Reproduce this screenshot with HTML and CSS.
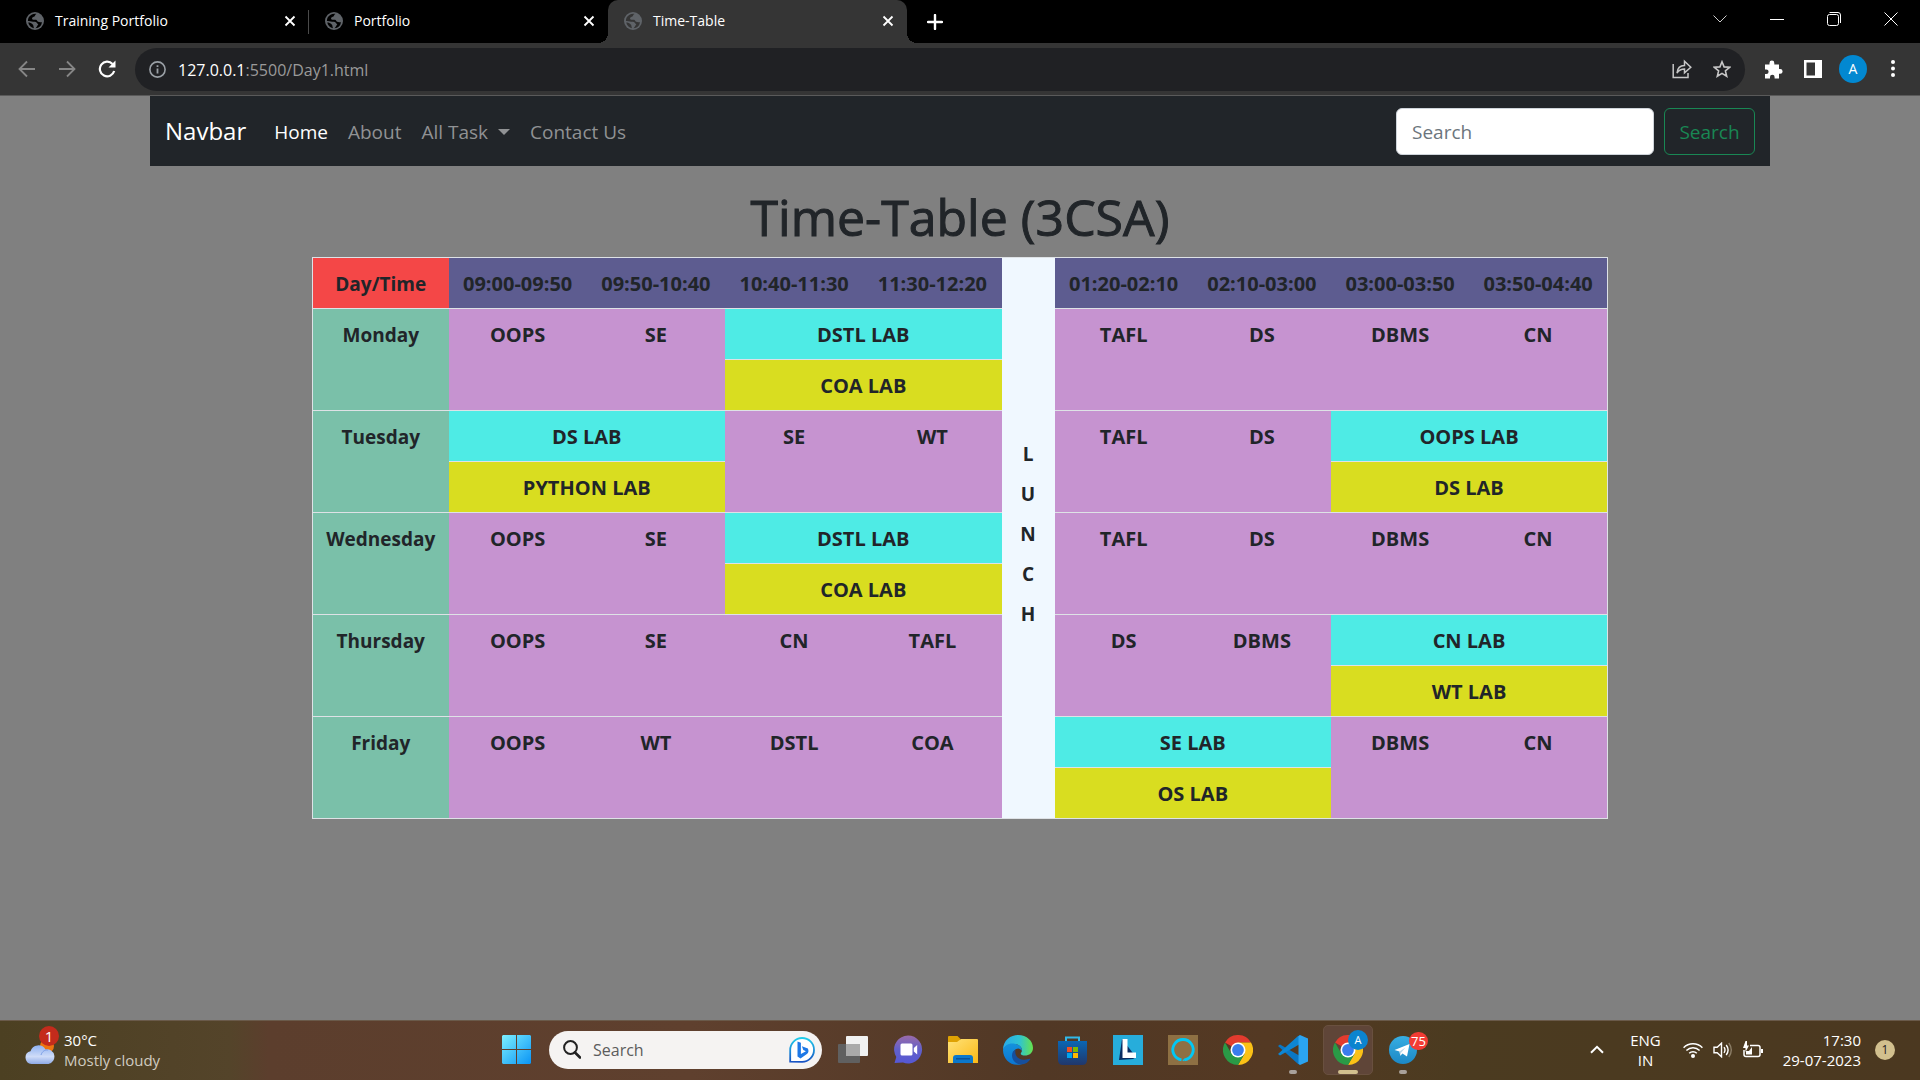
FILE: index.html
```html
<!DOCTYPE html>
<html lang="en">
<head>
<meta charset="utf-8">
<meta name="viewport" content="width=device-width, initial-scale=1">
<title>Time-Table</title>
<link rel="stylesheet" href="styles.css">
</head>
<body>
<svg class="defs" aria-hidden="true">
  <symbol id="globe" viewBox="0 0 18 18">
    <circle cx="9" cy="9" r="9" fill="#5f6368"/>
    <path d="M10.500 1.900C8.500 2.600 9.800 4 7.800 4.800 6 5.500 5.600 6.500 6.500 7.500 8 8.300 10 7.200 11 8.600 11.600 10 13 10.600 16 10.200A7.300 7.300 0 0 1 9.500 16.300C11.500 14.500 11 13.500 12.300 12.600 10.800 11.200 10.800 10 8.800 9.800 6 9.800 5 8.800 1.900 9A7.200 7.200 0 0 1 5.500 2.700C7 1.900 9 1.700 10.500 1.900zM2.200 10.500C4 10.500 5.500 11 6.500 12.200 7.800 13 7.200 14.500 8 16.200 5 15.800 2.800 13.500 2.200 10.500z" fill="currentColor"/>
  </symbol>
  <symbol id="cross" viewBox="0 0 12 12"><path d="M1.500 1.500l9 9M10.500 1.500l-9 9" stroke="#fff" stroke-width="1.800" fill="none"/></symbol>
  <symbol id="chrome" viewBox="0 0 30 30">
    <path d="M15 15L2 7.500A15 15 0 0 1 28 7.500H15z" fill="#e33b2e"/>
    <path d="M15 7.500H28A15 15 0 0 1 15 30L21.500 18.750z" fill="#fbc116"/>
    <path d="M2 7.500A15 15 0 0 0 15 30L21.500 18.750 8.500 18.750z" fill="#2a9a46"/>
    <circle cx="15" cy="15" r="7.500" fill="#fff"/><circle cx="15" cy="15" r="5.900" fill="#3b7ded"/>
  </symbol>
</svg>

<header class="browser">
  <div class="tabstrip">
    <div class="tabs">
      <div class="tab tab-divided"><svg class="favicon"><use href="#globe"/></svg><span class="tab-title">Training Portfolio</span><button class="tab-close" aria-label="Close tab"><svg><use href="#cross"/></svg></button></div>
      <div class="tab"><svg class="favicon"><use href="#globe"/></svg><span class="tab-title">Portfolio</span><button class="tab-close" aria-label="Close tab"><svg><use href="#cross"/></svg></button></div>
      <div class="tab tab-active"><svg class="favicon"><use href="#globe"/></svg><span class="tab-title">Time-Table</span><button class="tab-close" aria-label="Close tab"><svg><use href="#cross"/></svg></button></div>
      <button class="new-tab" aria-label="New tab"><svg width="16" height="16" viewBox="0 0 16 16"><path d="M8 1v14M1 8h14" stroke="#fff" stroke-width="2.400" stroke-linecap="round"/></svg></button>
    </div>
    <div class="window-controls">
      <button aria-label="Search tabs"><svg width="14" height="8" viewBox="0 0 14 8"><path d="M.5.5L7 7 13.500.5" fill="none" stroke="#ccc"/></svg></button>
      <button aria-label="Minimize"><svg width="14" height="14" viewBox="0 0 14 14"><path d="M0 7.500h14" stroke="#fff"/></svg></button>
      <button aria-label="Restore"><svg width="14" height="14" viewBox="0 0 14 14"><rect x=".5" y="2.500" width="11" height="11" rx="2" fill="none" stroke="#fff"/><path d="M2.500.5H11A2.500 2.500 0 0 1 13.500 3v8" fill="none" stroke="#fff"/></svg></button>
      <button aria-label="Close"><svg width="14" height="14" viewBox="0 0 14 14"><path d="M.5.5l13 13M13.500.5l-13 13" stroke="#fff"/></svg></button>
    </div>
  </div>
  <div class="toolbar">
    <button aria-label="Back"><svg width="18" height="18" viewBox="0 0 18 18"><path d="M17 9H2M9 1.500L1.500 9 9 16.500" fill="none" stroke="#868686" stroke-width="1.800"/></svg></button>
    <button aria-label="Forward"><svg width="18" height="18" viewBox="0 0 18 18"><path d="M1 9h15M9 1.500L16.500 9 9 16.500" fill="none" stroke="#868686" stroke-width="1.800"/></svg></button>
    <button aria-label="Reload"><svg width="18" height="18" viewBox="0 0 18 18"><path d="M16.200 11A7.300 7.300 0 1 1 14.500 4" fill="none" stroke="#fff" stroke-width="2.200"/><path d="M17.500.5v7h-7z" fill="#fff"/></svg></button>
    <div class="address">
      <svg width="17" height="17" viewBox="0 0 17 17"><circle cx="8.500" cy="8.500" r="7.600" fill="none" stroke="#9aa0a6" stroke-width="1.600"/><path d="M8.500 7.500v5M8.500 4.200v1.800" stroke="#9aa0a6" stroke-width="1.800"/></svg>
      <div class="url" role="textbox" aria-label="Address" contenteditable="true" spellcheck="false">127.0.0.1<span class="url-path">:5500/Day1.html</span></div>
      <button aria-label="Share"><svg width="20" height="20" viewBox="0 0 20 20"><path d="M1.200 5V18.500H16V14M5 14C5.500 8.500 8.500 6.500 12.500 6.500V2.200L18.800 8.300 12.500 13.800V10C9 10 7 11 5 14z" fill="none" stroke="#c7c7c7" stroke-width="1.500"/></svg></button>
      <button aria-label="Bookmark"><svg width="18" height="18" viewBox="0 0 18 18"><path d="M9 1.800l2.100 5.100 5.500.4-4.200 3.600 1.300 5.400L9 13.400l-4.700 2.900 1.300-5.400L1.400 7.300l5.500-.4z" fill="none" stroke="#c7c7c7" stroke-width="1.600"/></svg></button>
    </div>
    <button aria-label="Extensions"><svg width="19" height="19" viewBox="0 0 19 19"><path d="M1 4.500H5.500V3A2.400 2.400 0 0 1 10.300 3V4.500H15V9H16.200A2.400 2.400 0 0 1 16.200 13.800H15V18.500H10.600V17A2.300 2.300 0 0 0 6 17V18.500H1V14H2.300A2.300 2.300 0 0 0 2.300 9.400H1z" fill="#fff"/></svg></button>
    <button aria-label="Side panel"><svg width="18" height="18" viewBox="0 0 18 18"><path d="M0 0h18v18H0zM2.500 2.500v13H11v-13z" fill="#fff" fill-rule="evenodd"/></svg></button>
    <button aria-label="Profile"><span class="avatar">A</span></button>
    <button aria-label="Menu"><svg width="4" height="18" viewBox="0 0 4 18"><g fill="#fff"><circle cx="2" cy="2" r="2"/><circle cx="2" cy="8.500" r="2"/><circle cx="2" cy="15" r="2"/></g></svg></button>
  </div>
</header>

<main class="page">
  <div class="container">
    <nav class="navbar">
      <a class="brand" href="#">Navbar</a>
      <ul class="nav-links">
        <li><a class="active" href="#">Home</a></li>
        <li><a href="#">About</a></li>
        <li><a class="dropdown" href="#">All Task</a></li>
        <li><a href="#">Contact Us</a></li>
      </ul>
      <form class="nav-search">
        <input type="search" placeholder="Search" aria-label="Search">
        <button type="button">Search</button>
      </form>
    </nav>
    <h1>Time-Table (3CSA)</h1>
    <table class="timetable">
      <colgroup><col class="col-day"><col span="4"><col class="col-lunch"><col span="4"></colgroup>
      <tr class="times">
        <th class="corner">Day/Time</th><th>09:00-09:50</th><th>09:50-10:40</th><th>10:40-11:30</th><th>11:30-12:20</th>
        <th class="lunch" rowspan="11">L<br>U<br>N<br>C<br>H</th>
        <th>01:20-02:10</th><th>02:10-03:00</th><th>03:00-03:50</th><th>03:50-04:40</th>
      </tr>
      <tr>
        <th class="day" rowspan="2">Monday</th><td rowspan="2">OOPS</td><td rowspan="2">SE</td><td class="lab-a" colspan="2">DSTL LAB</td>
        <td rowspan="2">TAFL</td><td rowspan="2">DS</td><td rowspan="2">DBMS</td><td rowspan="2">CN</td>
      </tr>
      <tr><td class="lab-b" colspan="2">COA LAB</td></tr>
      <tr>
        <th class="day" rowspan="2">Tuesday</th><td class="lab-a" colspan="2">DS LAB</td><td rowspan="2">SE</td><td rowspan="2">WT</td>
        <td rowspan="2">TAFL</td><td rowspan="2">DS</td><td class="lab-a" colspan="2">OOPS LAB</td>
      </tr>
      <tr><td class="lab-b" colspan="2">PYTHON LAB</td><td class="lab-b" colspan="2">DS LAB</td></tr>
      <tr>
        <th class="day" rowspan="2">Wednesday</th><td rowspan="2">OOPS</td><td rowspan="2">SE</td><td class="lab-a" colspan="2">DSTL LAB</td>
        <td rowspan="2">TAFL</td><td rowspan="2">DS</td><td rowspan="2">DBMS</td><td rowspan="2">CN</td>
      </tr>
      <tr><td class="lab-b" colspan="2">COA LAB</td></tr>
      <tr>
        <th class="day" rowspan="2">Thursday</th><td rowspan="2">OOPS</td><td rowspan="2">SE</td><td rowspan="2">CN</td><td rowspan="2">TAFL</td>
        <td rowspan="2">DS</td><td rowspan="2">DBMS</td><td class="lab-a" colspan="2">CN LAB</td>
      </tr>
      <tr><td class="lab-b" colspan="2">WT LAB</td></tr>
      <tr>
        <th class="day" rowspan="2">Friday</th><td rowspan="2">OOPS</td><td rowspan="2">WT</td><td rowspan="2">DSTL</td><td rowspan="2">COA</td>
        <td class="lab-a" colspan="2">SE LAB</td><td rowspan="2">DBMS</td><td rowspan="2">CN</td>
      </tr>
      <tr><td class="lab-b" colspan="2">OS LAB</td></tr>
    </table>
  </div>
</main>

<footer class="taskbar">
  <button class="weather">
    <span class="weather-icon">
      <svg width="30" height="26" viewBox="0 0 30 26"><defs><linearGradient id="cl" x2="0" y2="1"><stop offset="0" stop-color="#8fb2f2"/><stop offset=".6" stop-color="#cfdcf8"/><stop offset="1" stop-color="#8eaae6"/></linearGradient></defs><circle cx="22" cy="8" r="7" fill="#ee7410"/><path d="M6.500 26A6.500 6.500 0 0 1 5.500 13.200 8.200 8.200 0 0 1 20.500 11.500 7.300 7.300 0 0 1 23.500 26z" fill="url(#cl)"/><path d="M16 17c1-3.500 4-5.500 7-5" stroke="#7d9fe6" fill="none"/></svg>
      <span class="weather-badge">1</span>
    </span>
    <span class="weather-text"><span>30°C</span><span class="muted">Mostly cloudy</span></span>
  </button>

  <div class="apps">
    <button class="app" aria-label="Start"><svg width="30" height="30" viewBox="0 0 30 30"><defs><linearGradient id="win" x2="1" y2="1"><stop offset="0" stop-color="#7df0ff"/><stop offset="1" stop-color="#0a94f5"/></linearGradient></defs><path d="M1 0h13v14H0V1zM15 0h13l1 1v13H15zM0 15h14v14H1l-1-1zM15 15h14v13l-1 1H15z" fill="url(#win)"/></svg></button>
    <label class="task-search">
      <svg width="18" height="19" viewBox="0 0 18 19"><circle cx="7.500" cy="7.500" r="6.400" fill="none" stroke="#222" stroke-width="2"/><path d="M12 12.500l5 5" stroke="#222" stroke-width="2.600" stroke-linecap="round"/></svg>
      <input type="text" placeholder="Search" aria-label="Search Windows">
      <svg width="26" height="26" viewBox="0 0 26 26"><defs><linearGradient id="bg" x2="0" y2="1"><stop offset="0" stop-color="#20cdea"/><stop offset="1" stop-color="#1752c4"/></linearGradient></defs><path d="M1.200 24.700V13A11.900 11.900 0 1 1 13 24.800z" fill="#fff" stroke="url(#bg)" stroke-width="1.800"/><path d="M8.500 4.500l3.400 1.200V17l5-2.800-2.600-1.300-1.400-3.700 6 2.200q1.500 3.800-1 5.500L11.500 21.500l-3-2z" fill="#1e78e6"/></svg>
    </label>
    <button class="app" aria-label="Task view"><svg width="30" height="28" viewBox="0 0 30 28"><rect y="8" width="22" height="19" rx="1" fill="#606060"/><rect x="8" width="22" height="20" rx="1" fill="#f1f1f1"/><path d="M8 8h14v12H8z" fill="#aaa"/></svg></button>
    <button class="app" aria-label="Chat"><svg width="29" height="29" viewBox="0 0 29 29"><defs><linearGradient id="ch" x2="0" y2="1"><stop offset="0" stop-color="#9b6ba8"/><stop offset=".5" stop-color="#6260c9"/><stop offset="1" stop-color="#5558d5"/></linearGradient></defs><path d="M.5 28l1.800-6A14 14 0 1 1 9 27.500z" fill="url(#ch)"/><rect x="6.500" y="8.500" width="12" height="12" rx="1.500" fill="#fff"/><path d="M19.800 13l3.400-3v9.500l-3.400-3z" fill="#fff"/></svg></button>
    <button class="app" aria-label="File Explorer"><svg width="30" height="27" viewBox="0 0 30 27"><defs><linearGradient id="fo" x2="1" y2="1"><stop offset="0" stop-color="#ffe278"/><stop offset="1" stop-color="#fbb916"/></linearGradient></defs><path d="M0 1Q0 0 1 0h8.500l3 3v6H0z" fill="#dfa203"/><path d="M0 6h9l4-3h16q1 0 1 1v23H0z" fill="url(#fo)"/><path d="M5 27v-5q0-3 3-3h14q3 0 3 3v5z" fill="#0b78cc"/><path d="M8 22.800h14" stroke="#084f96" stroke-width="1.400"/></svg></button>
    <button class="app" aria-label="Edge"><svg width="30" height="30" viewBox="0 0 30 30"><defs><linearGradient id="e1"><stop offset="0" stop-color="#28a9e8"/><stop offset=".55" stop-color="#2fc3d2"/><stop offset="1" stop-color="#66e34c"/></linearGradient><linearGradient id="e2" x2="0" y2="1"><stop offset="0" stop-color="#1492dc"/><stop offset="1" stop-color="#0b75d3"/></linearGradient></defs><path d="M0 15C0 5 8 0 15 0c9 0 15 6 15 13 0 5-4 7.500-8 7.500-3 0-5-1-4-2.500 3-4-1-9-6.500-9C6 9 2 11 0 15z" fill="url(#e1)"/><path d="M0 15C1 10.500 5.500 8 10.500 8.500c5 .5 9 3.500 8.300 7.500C17 11.500 10 13 10 20c0 5 4 9 9 9C9 32.500 0 25 0 15z" fill="url(#e2)"/><path d="M12.500 14.500C11 22 17 25.800 23 24.500q4.500-1 4.500-.5-3 5-9.500 5.500C11 29 7 22 10 16.500z" fill="#164f9d"/></svg></button>
    <button class="app" aria-label="Microsoft Store"><svg width="30" height="30" viewBox="0 0 30 30"><defs><linearGradient id="st" x2="0" y2="1"><stop offset="0" stop-color="#0a66b4"/><stop offset="1" stop-color="#21376b"/></linearGradient></defs><path d="M8 8V2.500h13V8" fill="none" stroke="#31b9e9" stroke-width="2"/><path d="M0 6h29v19q0 5-5 5H5q-5 0-5-5z" fill="url(#st)"/><path d="M9 12h5v5H9z" fill="#f25022"/><path d="M15 12h5v5h-5z" fill="#7fba00"/><path d="M9 18h5v5H9z" fill="#00a4ef"/><path d="M15 18h5v5h-5z" fill="#ffb900"/></svg></button>
    <button class="app" aria-label="L app"><svg width="30" height="30" viewBox="0 0 30 30"><path d="M0 0h30v30H0z" fill="#27addb"/><path d="M9 4L6 25l14-1 3-2z" fill="#092c62"/><path d="M9.500 4h5v13.500H23V23H9.500z" fill="#fff"/></svg></button>
    <button class="app" aria-label="Alexa"><svg width="30" height="30" viewBox="0 0 30 30"><path d="M0 0h30v30H0z" fill="#8e7043"/><path d="M13.500 24.800A10.200 10.200 0 1 1 16.500 24.800" fill="none" stroke="#00c8f5" stroke-width="2.800"/><path d="M14.500 25l2.500-1.500v1.800l-2 1z" fill="#00c8f5"/></svg></button>
    <button class="app" aria-label="Chrome"><svg width="30" height="30"><use href="#chrome"/></svg></button>
    <button class="app running" aria-label="VS Code"><svg width="30" height="30" viewBox="0 0 30 30"><path d="M2 9.500L0 11l19.500 17.500L22 30V21z" fill="#0a77c5"/><path d="M2 20.500L0 19 19.500 1.500 22 0v9z" fill="#0d86d4"/><path d="M22 0l8 3.500v23L22 30l-1.500-1.500V1.500z" fill="#2ba4f0"/></svg></button>
    <button class="app running focused" aria-label="Chrome profile A"><svg width="30" height="30"><use href="#chrome"/></svg><span class="app-badge profile">A</span></button>
    <button class="app running" aria-label="Telegram"><svg width="28" height="28" viewBox="0 0 28 28"><defs><linearGradient id="tg" x2="0" y2="1"><stop offset="0" stop-color="#37aee2"/><stop offset="1" stop-color="#1c88c5"/></linearGradient></defs><circle cx="14" cy="14" r="14" fill="url(#tg)"/><path d="M5.500 14L20.500 8l-2.500 12.500-4.500-3-2.200 2.300-.8-4.300z" fill="#fff"/><path d="M10.500 15.500l6-4-4.600 5.500-.6 2.800z" fill="#b9d8e9"/></svg><span class="app-badge count">75</span></button>
  </div>

  <div class="tray">
    <button aria-label="Hidden icons"><svg width="14" height="9" viewBox="0 0 14 9"><path d="M1 7.800L7 1.800l6 6" fill="none" stroke="#fff" stroke-width="2"/></svg></button>
    <button class="language"><span>ENG</span><span>IN</span></button>
    <button class="status" aria-label="Network, volume, battery">
      <svg width="20" height="16" viewBox="0 0 20 16"><g fill="none" stroke="#fff" stroke-width="1.500"><path d="M.6 5.700A13.200 13.200 0 0 1 19.400 5.700M3.400 8.500A9.300 9.300 0 0 1 16.600 8.500M6.200 11.300A5.400 5.400 0 0 1 13.800 11.300"/></g><circle cx="10" cy="14" r="2" fill="#fff"/></svg>
      <svg width="20" height="16" viewBox="0 0 20 16"><g fill="none" stroke="#fff" stroke-width="1.400"><path d="M1 5.200h3.200L8.500 1.200V14.800L4.200 10.800H1zM11 5.200q2 2.800 0 5.600M13.200 3q3.800 5 0 10"/><path d="M15.800 1q5 7 0 14" stroke="#8b7d66"/></g></svg>
      <svg width="20" height="17" viewBox="0 0 20 17"><path d="M7 4.500h8q2 0 2 2v7q0 2-2 2H3q-2 0-2-2V9" fill="none" stroke="#fff" stroke-width="1.500"/><path d="M18 8h2v4h-2zM3 10h3l3-4v7.500H3zM2.500 0L0 7h2.500v4L6 4.500H4V0z" fill="#fff"/></svg>
    </button>
    <button class="clock"><span>17:30</span><span>29-07-2023</span></button>
    <button class="notices" aria-label="Notifications">1</button>
  </div>
</footer>
</body>
</html>
```
FILE: styles.css
```css
* { box-sizing: border-box; }

body {
  margin: 0;
  min-height: 100vh;
  display: flex;
  flex-direction: column;
  background: #808080;
  color: #212529;
  font-family: "Open Sans", "Noto Sans", sans-serif;
}

button {
  display: flex;
  align-items: center;
  justify-content: center;
  padding: 0;
  border: 0;
  background: none;
  color: inherit;
  font: inherit;
}

a { text-decoration: none; }
.defs { display: none; }
svg { flex: none; }

/* Browser frame */
.tabstrip {
  display: flex;
  justify-content: space-between;
  height: 43px;
  background: #000;
  color: #fff;
}

.tabs { display: flex; padding-left: 10px; }

.tab {
  position: relative;
  display: flex;
  align-items: center;
  gap: 11px;
  width: 299px;
  padding: 0 9px 2px 16px;
  color: #000;
}

.tab-divided::after {
  content: "";
  position: absolute;
  right: 0;
  top: 10px;
  width: 1px;
  height: 24px;
  background: #4a4a4a;
}
.tab-active { background: #353535; border-radius: 10px 10px 0 0; color: #353535; }

.tab-active::before,
.tab-active::after {
  content: "";
  position: absolute;
  bottom: 0;
  width: 10px;
  height: 10px;
}
.tab-active::before { right: 100%; background: radial-gradient(circle at 0 0, #000 10px, #353535 10px); }
.tab-active::after { left: 100%; background: radial-gradient(circle at 100% 0, #000 10px, #353535 10px); }

.favicon { width: 18px; height: 18px; }
.tab-title { flex: 1; color: #fff; font-size: 14px; line-height: 20px; }
.tab-close { width: 20px; height: 20px; }
.tab-close svg { width: 12px; height: 12px; }
.new-tab { width: 56px; }
.window-controls { display: flex; height: 37px; padding-right: 1px; }
.window-controls button { width: 57px; }

.toolbar {
  display: flex;
  align-items: center;
  height: 53px;
  padding: 0 7px;
  background: #353535;
  border-bottom: 1px solid #5a5a5a;
}
.toolbar button { width: 40px; height: 40px; }

.address {
  flex: 1;
  display: flex;
  align-items: center;
  height: 43px;
  margin: 0 8px;
  padding: 0 3px 0 14px;
  border-radius: 22px;
  background: #202124;
}
.url { flex: 1; margin-left: 12px; padding-top: 1px; color: #fff; font-size: 16px; line-height: 24px; outline: none; }
.url-path { color: #9a9a9a; }

.avatar {
  width: 28px;
  height: 28px;
  border-radius: 50%;
  background: #0288d1;
  color: #fff;
  font-size: 14px;
  line-height: 28px;
}

/* Page */
.page { flex: 1; }
.container { max-width: 1650px; margin: 0 auto; padding: 0 15px; }

.navbar {
  display: flex;
  align-items: center;
  height: 70px;
  padding: 0 15px;
  background: #212529;
  font-size: 19px;
  line-height: 30px;
}
.brand { margin-right: 18px; color: #fff; font-size: 24px; }
.nav-links { display: flex; flex: 1; margin: 0; padding: 0; list-style: none; }
.nav-links a { display: flex; align-items: center; padding: 11px 10px 9px; color: #909294; }
.nav-links .active { color: #fff; }
.dropdown::after {
  content: "";
  margin-left: 10px;
  border: 6px solid transparent;
  border-top-color: currentColor;
  border-bottom: 0;
}
.nav-search { display: flex; gap: 10px; }
.nav-search input,
.nav-search button {
  height: 47px;
  border-radius: 6px;
  padding: 1px 15px 0;
  font: inherit;
}
.nav-search input { width: 258px; border: 1px solid #ced4da; background: #fff; }
.nav-search input::placeholder { color: #6c757d; opacity: 1; }
.nav-search button { width: 91px; border: 1px solid #198754; color: #198754; }

h1 {
  margin: 21px 0 10px;
  font-size: 50px;
  font-weight: 500;
  line-height: 60px;
  text-align: center;
  -webkit-text-stroke: 1px currentColor;
}

.timetable {
  width: 80%;
  margin: 0 auto;
  border: 1px solid #dee2e6;
  border-collapse: collapse;
  table-layout: fixed;
  font-size: 20px;
  font-weight: 700;
  line-height: 30px;
  text-align: center;
}
.col-day { width: 136px; }
.col-lunch { width: 53px; }
.timetable th,
.timetable td {
  height: 51px;
  padding: 11px 0 9px;
  border-top: 1px solid #dee2e6;
  vertical-align: top;
  background: #c693d0;
}
.timetable .times th { background: #5d5c90; }
.timetable .times .corner { background: #f44747; font-size: 19px; }
.timetable .times .lunch { padding: 0 0 8px; background: #f0f8ff; font-size: 19px; line-height: 40px; vertical-align: middle; }
.timetable .day { background: #7ac0a9; font-size: 19px; }
.timetable .lab-a { background: #4eebe5; }
.timetable .lab-b { background: #d9dd20; }

/* Taskbar */
.taskbar {
  display: grid;
  grid-template-columns: 1fr auto 1fr;
  align-items: center;
  height: 60px;
  padding-bottom: 2px;
  border-top: 1px solid #6a5a4a;
  background: linear-gradient(90deg, #4c4022, #54442a 12%, #5c3e2d 14%, #5f402e 36%, #513825 54%, #543923 66%, #4b3b20 76%, #4b3820);
  color: #fff;
  font-size: 15px;
  line-height: 20px;
}
.weather { justify-self: start; gap: 9px; padding-left: 25px; }
.weather-icon { position: relative; display: flex; width: 30px; padding-top: 3px; }
.weather-badge {
  position: absolute;
  top: -9px;
  right: -4px;
  width: 20px;
  height: 20px;
  border-radius: 50%;
  background: #c42b1c;
}
.weather-text { display: flex; flex-direction: column; align-items: flex-start; }
.muted { color: #d0cbc0; }

.apps { display: flex; align-items: center; gap: 5px; }
.app { position: relative; width: 50px; height: 50px; border-radius: 5px; }
.task-search {
  display: flex;
  align-items: center;
  gap: 12px;
  width: 273px;
  height: 38px;
  margin: 0 1px 0 2px;
  padding: 0 7px 0 14px;
  border-radius: 19px;
  background: #f5f3f2;
}
.task-search input {
  flex: 1;
  min-width: 0;
  padding: 0;
  border: 0;
  background: none;
  font: inherit;
  font-size: 16px;
}
.task-search input::placeholder { color: #5c5c5c; opacity: 1; }
.running::after {
  content: "";
  position: absolute;
  bottom: 1px;
  width: 8px;
  height: 4px;
  border-radius: 2px;
  background: #a9a19b;
}
.focused { background: #5f4538; border: 1px solid #69503f; }
.focused::after { bottom: 0; width: 20px; background: #d2c08e; }
.app-badge { position: absolute; height: 18px; line-height: 18px; border-radius: 9px; }
.profile { top: 4px; right: 4px; width: 20px; height: 20px; line-height: 20px; border-radius: 10px; background: #0b84cf; font-size: 11px; }
.count { top: 7px; right: 0; width: 19px; background: #f23c34; font-size: 13px; }

.tray { display: flex; justify-content: flex-end; align-items: center; padding-right: 25px; }
.language,
.clock { flex-direction: column; }
.language { margin-left: 26px; }
.status { gap: 10px; margin-left: 22px; }
.clock { align-items: flex-end; margin-left: 20px; }
.notices {
  width: 20px;
  height: 20px;
  margin-left: 14px;
  border-radius: 50%;
  background: #d2c08e;
  color: #222;
  font-size: 12px;
}
```
